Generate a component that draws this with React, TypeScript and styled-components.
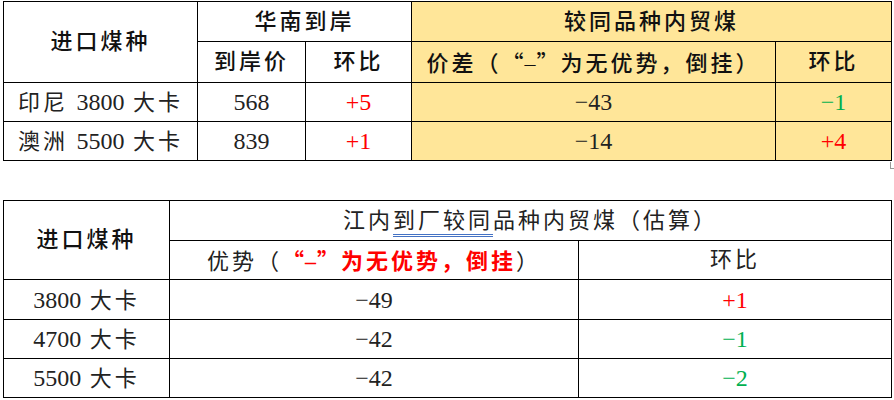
import styled, { createGlobalStyle } from "styled-components";

const GlobalStyle = createGlobalStyle`
  html, body {
    margin: 0;
    padding: 0;
    background: #ffffff;
  }
  body {
    font-family: "Liberation Serif", "Noto Sans CJK SC", serif;
    color: #000;
  }
`;

const Page = styled.div`
  display: flex;
  flex-direction: column;
  padding: 1px 0 0 3px;
  width: 888px;
`;

const Table = styled.table`
  border-collapse: collapse;
  table-layout: fixed;
  width: 888px;
`;

const Cell = styled.td<{ $fill?: boolean; $height: number; $head?: boolean }>`
  height: ${(p) => p.$height}px;
  box-sizing: border-box;
  padding: 0;
  border: 1px solid #000;
  background: ${(p) => (p.$fill ? "#ffe699" : "#ffffff")};
  text-align: center;
  vertical-align: middle;
  font-family: "Liberation Serif", "Noto Sans CJK SC", serif;
  font-size: 22px;
  font-weight: ${(p) => (p.$head ? 500 : 400)};
  letter-spacing: 3px;
  line-height: 1;
  color: ${(p) => (p.$head ? "#111" : "#222")};
  white-space: nowrap;
`;

const Num = styled.span<{ $tone?: "up" | "down" }>`
  font-family: "Liberation Serif", serif;
  font-size: 24px;
  letter-spacing: 0;
  color: ${(p) =>
    p.$tone === "up" ? "#ff0000" : p.$tone === "down" ? "#00b050" : "inherit"};
`;

// the closing quote takes a full-width cell, as a Song-style document font sets it
const QuoteMark = styled.span<{ $side: "open" | "close" }>`
  display: inline-block;
  width: ${(p) => (p.$side === "close" ? "24px" : "auto")};
  font-family: "Noto Sans CJK SC", sans-serif;
  letter-spacing: 0;
  text-align: left;
`;

const Dash = styled.span`
  font-family: "Liberation Serif", serif;
  letter-spacing: 0;
  padding: 0 1px;
`;

const Warn = styled.span`
  color: #ff0000;
  font-weight: 700;
`;

const Marked = styled.span`
  border-bottom: 3px double #4472c4;
  padding-bottom: 1px;
`;

const Spacer = styled.div`
  display: flex;
  justify-content: flex-end;
  height: 39px;
`;

const ParaMark = styled.div`
  width: 4px;
  height: 6px;
  margin-top: 1px;
  margin-right: -4px;
  border-left: 1px solid #999;
  border-bottom: 1px solid #999;
`;

function Quoted() {
  return (
    <>
      <QuoteMark $side="open">“</QuoteMark>
      <Dash>–</Dash>
      <QuoteMark $side="close">”</QuoteMark>
    </>
  );
}

type Row = { name: JSX.Element; price?: string; priceChange?: string; diff: string; change: string };

const tone = (v: string) => (v.startsWith("+") ? "up" : "down");

const southRows: Row[] = [
  { name: <>印尼 <Num>3800</Num> 大卡</>, price: "568", priceChange: "+5", diff: "−43", change: "−1" },
  { name: <>澳洲 <Num>5500</Num> 大卡</>, price: "839", priceChange: "+1", diff: "−14", change: "+4" },
];

const riverRows: Row[] = [
  { name: <><Num>3800</Num> 大卡</>, diff: "−49", change: "+1" },
  { name: <><Num>4700</Num> 大卡</>, diff: "−42", change: "−1" },
  { name: <><Num>5500</Num> 大卡</>, diff: "−42", change: "−2" },
];

const southHeights = [39, 39];
const riverHeights = [40, 39, 39];

function SouthTable() {
  return (
    <Table>
      <colgroup>
        <col style={{ width: 194 }} />
        <col style={{ width: 108 }} />
        <col style={{ width: 106 }} />
        <col style={{ width: 364 }} />
        <col style={{ width: 116 }} />
      </colgroup>
      <tbody>
        <tr>
          <Cell as="th" rowSpan={2} $height={40} $head>进口煤种</Cell>
          <Cell as="th" colSpan={2} $height={40} $head>华南到岸</Cell>
          <Cell as="th" colSpan={2} $height={40} $head $fill>较同品种内贸煤</Cell>
        </tr>
        <tr>
          <Cell as="th" $height={41} $head>到岸价</Cell>
          <Cell as="th" $height={41} $head>环比</Cell>
          <Cell as="th" $height={41} $head $fill>价差（<Quoted />为无优势，倒挂）</Cell>
          <Cell as="th" $height={41} $head $fill>环比</Cell>
        </tr>
        {southRows.map((r, i) => (
          <tr key={i}>
            <Cell $height={southHeights[i]}>{r.name}</Cell>
            <Cell $height={southHeights[i]}><Num>{r.price}</Num></Cell>
            <Cell $height={southHeights[i]}><Num $tone={tone(r.priceChange!)}>{r.priceChange}</Num></Cell>
            <Cell $height={southHeights[i]} $fill><Num>{r.diff}</Num></Cell>
            <Cell $height={southHeights[i]} $fill><Num $tone={tone(r.change)}>{r.change}</Num></Cell>
          </tr>
        ))}
      </tbody>
    </Table>
  );
}

function RiverTable() {
  return (
    <Table>
      <colgroup>
        <col style={{ width: 166 }} />
        <col style={{ width: 409 }} />
        <col style={{ width: 313 }} />
      </colgroup>
      <tbody>
        <tr>
          <Cell as="th" rowSpan={2} $height={40} $head>进口煤种</Cell>
          <Cell as="th" colSpan={2} $height={40}>
            江内<Marked>到厂较同</Marked>品种内贸煤（估算）
          </Cell>
        </tr>
        <tr>
          <Cell as="th" $height={39}>
            优势（<Warn><Quoted />为无优势，倒挂</Warn>）
          </Cell>
          <Cell as="th" $height={39}>环比</Cell>
        </tr>
        {riverRows.map((r, i) => (
          <tr key={i}>
            <Cell $height={riverHeights[i]}>{r.name}</Cell>
            <Cell $height={riverHeights[i]}><Num>{r.diff}</Num></Cell>
            <Cell $height={riverHeights[i]}><Num $tone={tone(r.change)}>{r.change}</Num></Cell>
          </tr>
        ))}
      </tbody>
    </Table>
  );
}

export default function App() {
  return (
    <>
      <GlobalStyle />
      <Page>
        <SouthTable />
        <Spacer>
          <ParaMark />
        </Spacer>
        <RiverTable />
      </Page>
    </>
  );
}
